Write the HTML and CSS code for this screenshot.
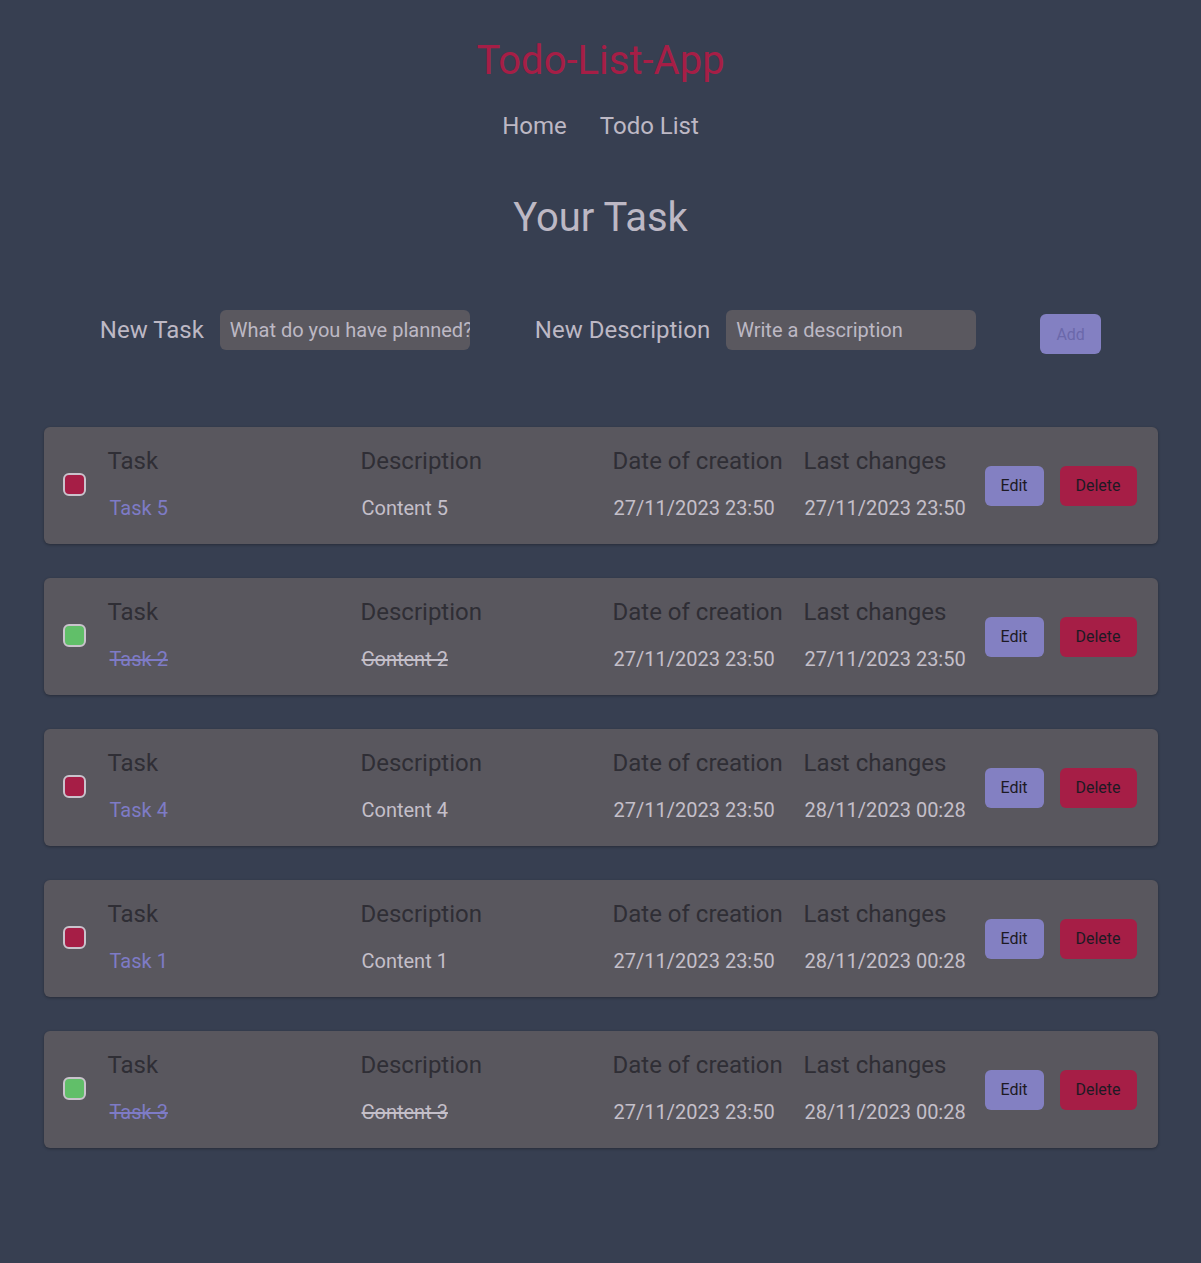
FILE: index.html
```html
<!DOCTYPE html>
<html lang="en">
<head>
<meta charset="utf-8">
<title>Todo-List-App</title>
<link rel="stylesheet" href="styles.css">
</head>
<body>
<header class="site-header">
  <h1 class="app-title">Todo-List-App</h1>
  <nav class="nav">
    <a class="nav-link" href="#">Home</a>
    <a class="nav-link" href="#">Todo List</a>
  </nav>
</header>
<main class="main">
  <h2 class="page-title">Your Task</h2>
  <form class="task-form">
    <label class="form-label" for="t">New Task</label>
    <input class="form-input" id="t" type="text" placeholder="What do you have planned?">
    <label class="form-label label-desc" for="d">New Description</label>
    <input class="form-input" id="d" type="text" placeholder="Write a description">
    <button class="add-btn" type="button">Add</button>
  </form>

  <ul class="task-list">
    <li class="card">
      <span class="check check-open"></span>
      <div class="col col-task"><div class="col-head">Task</div><div class="col-val val-task">Task 5</div></div>
      <div class="col col-desc"><div class="col-head">Description</div><div class="col-val">Content 5</div></div>
      <div class="col col-date"><div class="col-head">Date of creation</div><div class="col-val">27/11/2023 23:50</div></div>
      <div class="col col-last"><div class="col-head">Last changes</div><div class="col-val">27/11/2023 23:50</div></div>
      <button class="btn btn-edit" type="button">Edit</button>
      <button class="btn btn-delete" type="button">Delete</button>
    </li>
    <li class="card">
      <span class="check check-done"></span>
      <div class="col col-task"><div class="col-head">Task</div><div class="col-val val-task done">Task 2</div></div>
      <div class="col col-desc"><div class="col-head">Description</div><div class="col-val done">Content 2</div></div>
      <div class="col col-date"><div class="col-head">Date of creation</div><div class="col-val">27/11/2023 23:50</div></div>
      <div class="col col-last"><div class="col-head">Last changes</div><div class="col-val">27/11/2023 23:50</div></div>
      <button class="btn btn-edit" type="button">Edit</button>
      <button class="btn btn-delete" type="button">Delete</button>
    </li>
    <li class="card">
      <span class="check check-open"></span>
      <div class="col col-task"><div class="col-head">Task</div><div class="col-val val-task">Task 4</div></div>
      <div class="col col-desc"><div class="col-head">Description</div><div class="col-val">Content 4</div></div>
      <div class="col col-date"><div class="col-head">Date of creation</div><div class="col-val">27/11/2023 23:50</div></div>
      <div class="col col-last"><div class="col-head">Last changes</div><div class="col-val">28/11/2023 00:28</div></div>
      <button class="btn btn-edit" type="button">Edit</button>
      <button class="btn btn-delete" type="button">Delete</button>
    </li>
    <li class="card">
      <span class="check check-open"></span>
      <div class="col col-task"><div class="col-head">Task</div><div class="col-val val-task">Task 1</div></div>
      <div class="col col-desc"><div class="col-head">Description</div><div class="col-val">Content 1</div></div>
      <div class="col col-date"><div class="col-head">Date of creation</div><div class="col-val">27/11/2023 23:50</div></div>
      <div class="col col-last"><div class="col-head">Last changes</div><div class="col-val">28/11/2023 00:28</div></div>
      <button class="btn btn-edit" type="button">Edit</button>
      <button class="btn btn-delete" type="button">Delete</button>
    </li>
    <li class="card">
      <span class="check check-done"></span>
      <div class="col col-task"><div class="col-head">Task</div><div class="col-val val-task done">Task 3</div></div>
      <div class="col col-desc"><div class="col-head">Description</div><div class="col-val done">Content 3</div></div>
      <div class="col col-date"><div class="col-head">Date of creation</div><div class="col-val">27/11/2023 23:50</div></div>
      <div class="col col-last"><div class="col-head">Last changes</div><div class="col-val">28/11/2023 00:28</div></div>
      <button class="btn btn-edit" type="button">Edit</button>
      <button class="btn btn-delete" type="button">Delete</button>
    </li>
  </ul>
</main>
</body>
</html>
```

FILE: styles.css
```css
* { box-sizing: border-box; }

html, body {
  margin: 0;
  padding: 0;
}

body {
  background: #373f51;
  font-family: Roboto, "Liberation Sans", Arial, sans-serif;
  color: #bdb8c4;
  min-height: 1263px;
}

.site-header {
  display: flex;
  flex-direction: column;
  align-items: center;
  padding-top: 37px;
}

.app-title {
  margin: 0;
  font-size: 40px;
  line-height: 47px;
  font-weight: 400;
  color: #a61e46;
}

.nav {
  display: flex;
  gap: 33px;
  margin-top: 28px;
}

.nav-link {
  font-size: 24px;
  line-height: 28px;
  color: #bdb8c4;
  text-decoration: none;
}

.main {
  display: flex;
  flex-direction: column;
  align-items: center;
}

.page-title {
  margin: 54px 0 0;
  font-size: 40px;
  line-height: 47px;
  font-weight: 400;
  color: #bdb8c4;
}

.task-form {
  display: flex;
  align-items: center;
  margin-top: 69px;
  height: 40px;
}

.form-label {
  font-size: 24px;
  line-height: 28px;
  color: #bdb8c4;
  margin-right: 16px;
}

.label-desc {
  margin-left: 65px;
}

.form-input {
  width: 250px;
  height: 40px;
  border: none;
  border-radius: 6px;
  background: #5a585f;
  color: #bdb8c4;
  font-family: inherit;
  font-size: 20px;
  padding: 0 0 0 10px;
  outline: none;
}

.form-input::placeholder {
  color: #bdb8c4;
  opacity: 1;
}

.add-btn {
  margin-left: 64px;
  margin-top: 8px;
  width: 61px;
  height: 40px;
  border: none;
  border-radius: 6px;
  background: #8380c2;
  color: #6b68ab;
  font-family: inherit;
  font-size: 16px;
  padding: 0;
}

.task-list {
  list-style: none;
  margin: 77px 0 0;
  padding: 0;
  display: flex;
  flex-direction: column;
  gap: 34px;
}

.card {
  width: 1114px;
  height: 117px;
  background: #59575e;
  border-radius: 6px;
  box-shadow: 0 1px 3px rgba(0, 0, 0, 0.3);
  display: flex;
  align-items: center;
  padding: 0 20px 0 19px;
}

.check {
  width: 23px;
  height: 23px;
  border: 2px solid #c9c3cc;
  border-radius: 6px;
  margin-right: 22px;
  margin-bottom: 2px;
  flex: none;
}

.check-open { background: #a61e46; }
.check-done { background: #61bf69; }

.col {
  display: flex;
  flex-direction: column;
  gap: 21px;
  flex: none;
  margin-bottom: 4px;
}

.col-task { width: 253px; }
.col-desc { width: 252px; }
.col-date { width: 191px; }
.col-last { width: 181px; }

.col-head {
  font-size: 24px;
  line-height: 28px;
  color: #2f2e35;
}

.col-val {
  font-size: 20px;
  line-height: 24px;
  color: #c4bfc9;
  padding-left: 1px;
}

.val-task {
  color: #7e7bc6;
  padding-left: 2px;
}

.done {
  text-decoration: line-through;
}

.btn {
  height: 40px;
  border: none;
  border-radius: 6px;
  font-family: inherit;
  font-size: 16px;
  padding: 0;
  color: #1d1a24;
  flex: none;
}

.btn-edit {
  width: 59px;
  background: #8380c2;
}

.btn-delete {
  width: 77px;
  margin-left: 16px;
  background: #a61e46;
}
```
